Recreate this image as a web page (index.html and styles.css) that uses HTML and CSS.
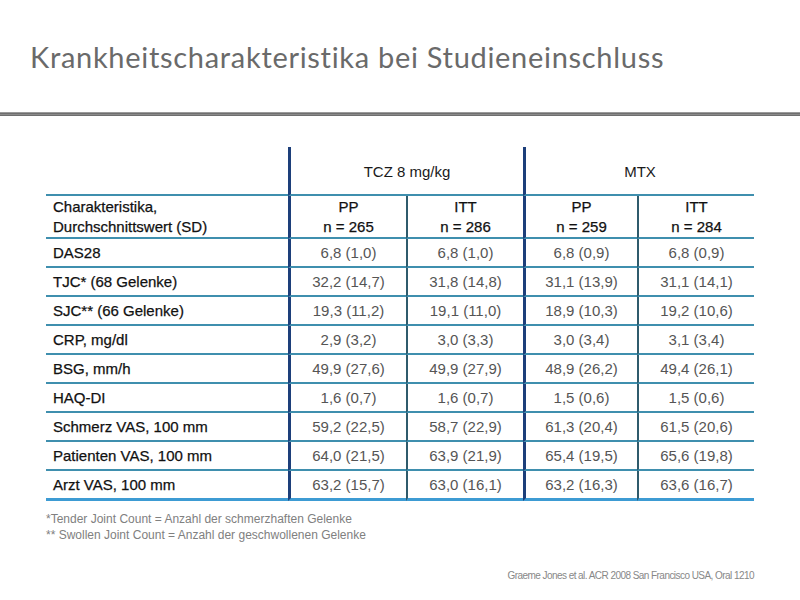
FILE: index.html
```html
<!DOCTYPE html>
<html lang="de">
<head>
<meta charset="utf-8">
<title>Krankheitscharakteristika bei Studieneinschluss</title>
<link rel="stylesheet" href="styles.css">
</head>
<body>
<div class="slide">
  <header class="head">
    <h1 class="title">Krankheitscharakteristika bei Studieneinschluss</h1>
  </header>
  <div class="rule"></div>
  <main class="content">
    <table class="data">
      <colgroup>
        <col class="c-label"><col class="c-a"><col class="c-b"><col class="c-c"><col class="c-d">
      </colgroup>
      <thead>
        <tr class="group">
          <th class="empty"></th>
          <th colspan="2" class="grp major">TCZ 8 mg/kg</th>
          <th colspan="2" class="grp major">MTX</th>
        </tr>
        <tr class="sub">
          <th class="label">Charakteristika,<br>Durchschnittswert (SD)</th>
          <th class="major">PP<br>n = 265</th>
          <th class="minor">ITT<br>n = 286</th>
          <th class="major">PP<br>n = 259</th>
          <th class="minor">ITT<br>n = 284</th>
        </tr>
      </thead>
      <tbody>
        <tr><td class="label">DAS28</td><td class="major">6,8 (1,0)</td><td class="minor">6,8 (1,0)</td><td class="major">6,8 (0,9)</td><td class="minor">6,8 (0,9)</td></tr>
        <tr><td class="label">TJC* (68 Gelenke)</td><td class="major">32,2 (14,7)</td><td class="minor">31,8 (14,8)</td><td class="major">31,1 (13,9)</td><td class="minor">31,1 (14,1)</td></tr>
        <tr><td class="label">SJC** (66 Gelenke)</td><td class="major">19,3 (11,2)</td><td class="minor">19,1 (11,0)</td><td class="major">18,9 (10,3)</td><td class="minor">19,2 (10,6)</td></tr>
        <tr><td class="label">CRP, mg/dl</td><td class="major">2,9 (3,2)</td><td class="minor">3,0 (3,3)</td><td class="major">3,0 (3,4)</td><td class="minor">3,1 (3,4)</td></tr>
        <tr><td class="label">BSG, mm/h</td><td class="major">49,9 (27,6)</td><td class="minor">49,9 (27,9)</td><td class="major">48,9 (26,2)</td><td class="minor">49,4 (26,1)</td></tr>
        <tr><td class="label">HAQ-DI</td><td class="major">1,6 (0,7)</td><td class="minor">1,6 (0,7)</td><td class="major">1,5 (0,6)</td><td class="minor">1,5 (0,6)</td></tr>
        <tr><td class="label">Schmerz VAS, 100 mm</td><td class="major">59,2 (22,5)</td><td class="minor">58,7 (22,9)</td><td class="major">61,3 (20,4)</td><td class="minor">61,5 (20,6)</td></tr>
        <tr><td class="label">Patienten VAS, 100 mm</td><td class="major">64,0 (21,5)</td><td class="minor">63,9 (21,9)</td><td class="major">65,4 (19,5)</td><td class="minor">65,6 (19,8)</td></tr>
        <tr class="last"><td class="label">Arzt VAS, 100 mm</td><td class="major">63,2 (15,7)</td><td class="minor">63,0 (16,1)</td><td class="major">63,2 (16,3)</td><td class="minor">63,6 (16,7)</td></tr>
      </tbody>
    </table>
    <div class="notes">
      <p class="note">*Tender Joint Count = Anzahl der schmerzhaften Gelenke</p>
      <p class="note">** Swollen Joint Count = Anzahl der geschwollenen Gelenke</p>
    </div>
    <p class="cite">Graeme Jones et al. ACR 2008 San Francisco USA, Oral 1210</p>
  </main>
</div>
</body>
</html>
```

FILE: styles.css
```css
html, body {
  margin: 0;
  padding: 0;
  background: #ffffff;
}

.slide {
  width: 800px;
  height: 600px;
  overflow: hidden;
  display: flex;
  flex-direction: column;
}

.head {
  height: 112px;
  box-sizing: border-box;
  padding: 39px 0 0 30px;
}

.title {
  margin: 0;
  font-family: "Lato", "Open Sans", sans-serif;
  font-weight: 400;
  font-size: 29px;
  line-height: 36px;
  color: #6a6a6a;
  letter-spacing: 0.7px;
}

.rule {
  height: 4px;
  background: linear-gradient(#9a9a9a 0 1px, #6f6f6f 1px 2px, #8a8a8a 2px 3px, #6f6f6f 3px 4px);
}

.content {
  padding: 31px 46px 0 46px;
  display: flex;
  flex-direction: column;
}

.data {
  width: 708px;
  border-collapse: separate;
  border-spacing: 0;
  table-layout: fixed;
  font-family: "Liberation Sans", Arial, sans-serif;
  font-size: 15px;
}

.c-label { width: 242px; }
.c-a { width: 118px; }
.c-b { width: 117px; }
.c-c { width: 114px; }
.c-d { width: 117px; }

.data th,
.data td {
  padding: 0;
  text-align: center;
  font-weight: 400;
  border-bottom: 2px solid #3f8fae;
}

.group th {
  height: 45px;
  vertical-align: middle;
  color: #1a1a1a;
  padding-top: 2px;
}

.sub th {
  height: 41px;
  line-height: 20px;
  color: #111;
  -webkit-text-stroke: 0.25px #111;
}

.sub th.label {
  text-align: left;
  padding-left: 7px;
}

.data td {
  height: 27px;
  color: #555;
}

.data td.label {
  text-align: left;
  padding-left: 7px;
  color: #111;
  -webkit-text-stroke: 0.25px #111;
}

.major {
  border-left: 3px solid #1d3f7a;
}

.minor {
  border-left: 2px solid #2f5b6c;
}

.data tr.last td {
  border-bottom: 3px solid #3d9bd3;
}

.notes {
  margin-top: 10px;
}

.note {
  margin: 0;
  font-family: "Liberation Sans", Arial, sans-serif;
  font-size: 12px;
  line-height: 16px;
  color: #808080;
}

.cite {
  margin: 27px 0 0 0;
  align-self: flex-end;
  font-family: "Liberation Sans", Arial, sans-serif;
  font-size: 10px;
  line-height: 12px;
  color: #888;
  letter-spacing: -0.55px;
}
```
